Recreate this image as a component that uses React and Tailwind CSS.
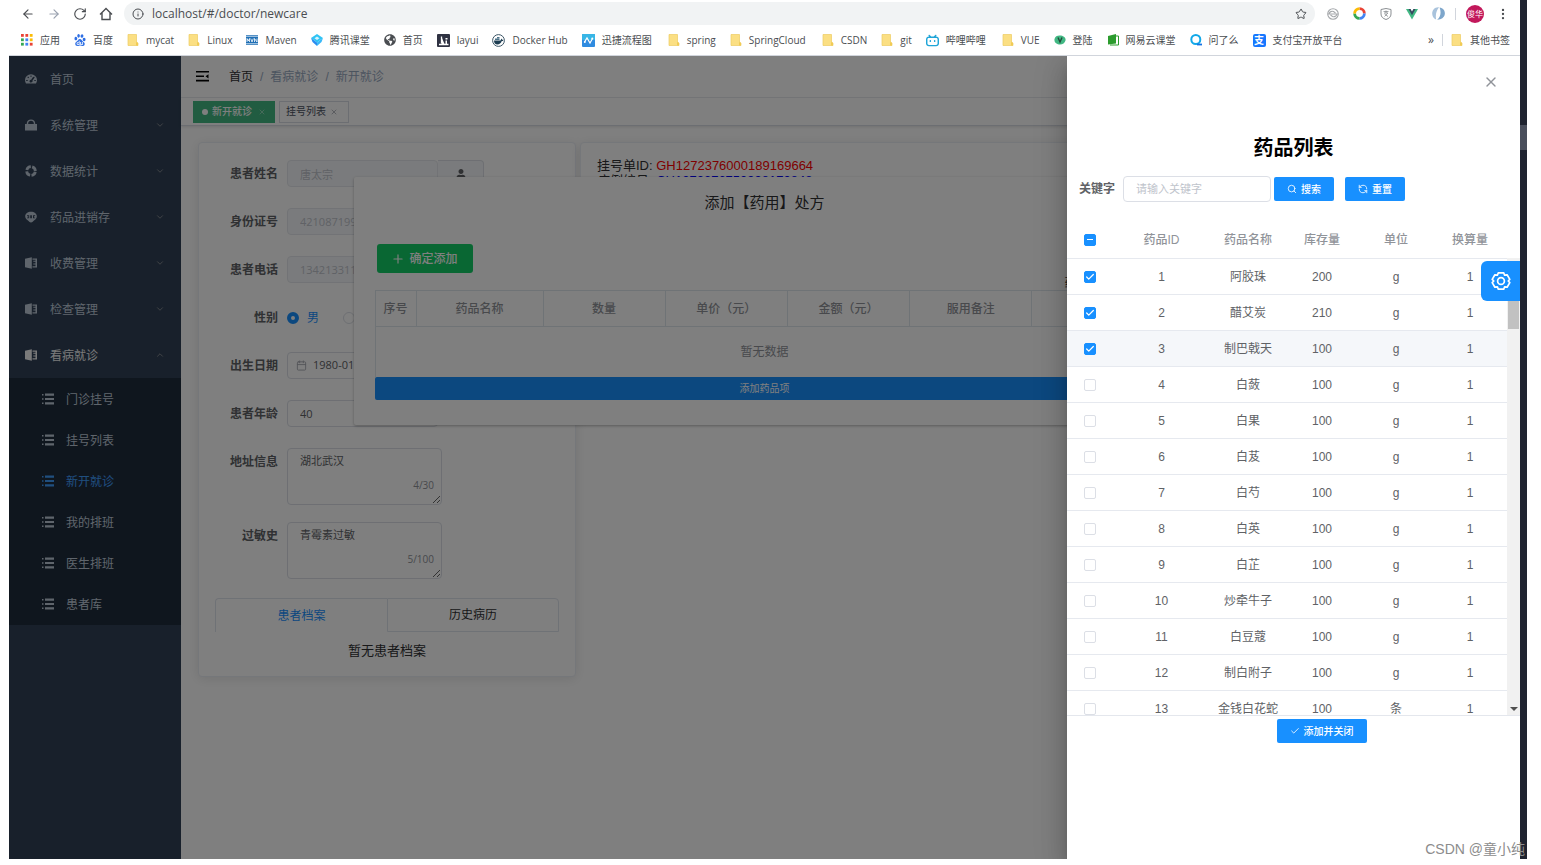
import { useState } from 'react'
import {
  ArrowLeft,
  ArrowRight,
  Calendar,
  Check,
  ChevronDown,
  ChevronUp,
  Info,
  MoreVertical,
  Plus,
  RefreshCcw,
  RotateCw,
  Search,
  Star,
  X,
} from 'lucide-react'
import { FaGlobeAmericas, FaUser } from 'react-icons/fa'
import { SiBaidu, SiBilibili } from 'react-icons/si'

const medicines = [
  { id: 1, name: '阿胶珠', stock: 200, unit: 'g' },
  { id: 2, name: '醋艾炭', stock: 210, unit: 'g' },
  { id: 3, name: '制巴戟天', stock: 100, unit: 'g' },
  { id: 4, name: '白蔹', stock: 100, unit: 'g' },
  { id: 5, name: '白果', stock: 100, unit: 'g' },
  { id: 6, name: '白芨', stock: 100, unit: 'g' },
  { id: 7, name: '白芍', stock: 100, unit: 'g' },
  { id: 8, name: '白英', stock: 100, unit: 'g' },
  { id: 9, name: '白芷', stock: 100, unit: 'g' },
  { id: 10, name: '炒牵牛子', stock: 100, unit: 'g' },
  { id: 11, name: '白豆蔻', stock: 100, unit: 'g' },
  { id: 12, name: '制白附子', stock: 100, unit: 'g' },
  { id: 13, name: '金钱白花蛇', stock: 100, unit: '条' },
]

/* ---------- icons ---------- */

function AppsIcon() {
  const colors = ['#ea4335', '#ea4335', '#fbbc05', '#34a853', '#4285f4', '#fbbc05', '#34a853', '#4285f4', '#ea4335']
  return (
    <svg viewBox="0 0 12 12" className="size-3">
      {colors.map((c, i) => (
        <rect key={i} x={(i % 3) * 4.4} y={Math.floor(i / 3) * 4.4} width="2.8" height="2.8" fill={c} />
      ))}
    </svg>
  )
}

function FolderIcon() {
  return (
    <svg viewBox="0 0 12 12" className="size-3">
      <path d="M1 .5h8.500v7.500l1.500 1v2.500H1z" fill="#fbdf83" stroke="#eccb62" strokeWidth=".7" />
      <path d="M9 8v3.500h2V9z" fill="#f1cb55" />
    </svg>
  )
}

function MavenIcon() {
  return (
    <svg viewBox="0 0 12 12" className="size-3">
      <rect y="1" width="12" height="10" fill="#1f6fb5" />
      <path d="M0 2.200h12M0 9.800h12" stroke="#fff" strokeWidth=".8" />
      <path d="M1 8V4.500L2.300 7l1.200-2.500V8M4.700 4.500L6 8l1.300-3.500M8.500 8V4.500L11 8V4.500" fill="none" stroke="#fff" strokeWidth=".8" />
    </svg>
  )
}

function TencentIcon() {
  return (
    <svg viewBox="0 0 12 12" className="size-3">
      <path d="M6 0l6 4-6 4.500L0 4z" fill="#2fc4f5" />
      <path d="M0 4l6 4.500V12L1.500 8z" fill="#2a8cf0" />
      <path d="M12 4L6 8.500V12l4.500-4z" fill="#38b8f8" />
      <path d="M6 2.500L8.500 4.200 6 6 3.500 4.200z" fill="#fff" opacity=".8" />
    </svg>
  )
}

function LayuiIcon() {
  return (
    <svg viewBox="0 0 13 13" className="size-[13px]">
      <rect width="13" height="13" rx="1" fill="#2f3242" />
      <path d="M4.500 2.500v7M2 10.500h9.500" fill="none" stroke="#fff" strokeWidth="1.300" />
      <path d="M5 4l2.500 6H5zM8.500 4h2v1.500h-2zM8.500 6.500h1.500V10H8.500z" fill="#fff" />
    </svg>
  )
}

function DockerIcon() {
  return (
    <svg viewBox="0 0 13 13" className="size-[13px]">
      <circle cx="6.500" cy="6.500" r="5.900" fill="#fff" stroke="#3c5566" />
      <path d="M2 6.500h6.500l1-2 .8 1.200 1.200.2c-.4 1-1 1.200-1.700 1.200C9 9.500 7.300 10.500 5.500 10.500 3.300 10.500 2 9 2 6.500z" fill="#1d3d52" />
      <path d="M3 4.500h4.500V6H3zM5 3h2.500v1.200H5z" fill="#4d7389" />
    </svg>
  )
}

function FlowIcon() {
  return (
    <svg viewBox="0 0 13 13" className="size-[13px]">
      <rect width="13" height="13" rx="1" fill="#2f8be0" />
      <rect width="13" height="6" rx="1" fill="#38b6e6" />
      <path d="M2.500 8l2.500-4 3 5 2.500-4.500" fill="none" stroke="#fff" strokeWidth="1.200" />
      <circle cx="2.800" cy="8" r="1" fill="#fff" />
      <circle cx="10.300" cy="4.500" r="1" fill="#fff" />
    </svg>
  )
}

function LoginIcon() {
  return (
    <svg viewBox="0 0 12 12" className="size-3">
      <path d="M.5 5C1 2 4 1 7 1.500S12 4 11.500 6.500 8 11 5 10.500 0 8 .5 5z" fill="#41b883" />
      <path d="M4 3.500l2 4.500 2-4.500" fill="none" stroke="#234a3c" strokeWidth="1.400" />
    </svg>
  )
}

function CloudClassIcon() {
  return (
    <svg viewBox="0 0 12 12" className="size-3">
      <path d="M1 2l8-2v9.500L1 10.500z" fill="#2c9c2e" />
      <path d="M9 2h2.500v9H3" fill="none" stroke="#2c9c2e" />
    </svg>
  )
}

function AskIcon() {
  return (
    <svg viewBox="0 0 12 12" className="size-3">
      <circle cx="5.800" cy="5.500" r="4.500" fill="none" stroke="#12a8e8" strokeWidth="2" />
      <path d="M7 10.500h5" stroke="#1573e6" strokeWidth="1.800" />
    </svg>
  )
}

function AlipayIcon() {
  return (
    <span className="flex size-[13px] items-center justify-center rounded-xs bg-[#1677ff] text-[10px] font-bold text-white">支</span>
  )
}

function VueIcon() {
  return (
    <svg viewBox="0 0 12 12" className="size-3">
      <path d="M0 1h12L6 11.500z" fill="#41b883" />
      <path d="M2.500 1h7L6 7.200z" fill="#34495e" />
      <path d="M4.600 1h2.800L6 3.500z" fill="#fff" />
    </svg>
  )
}

function RingIcon() {
  return (
    <svg viewBox="0 0 12 12" className="size-[13px]">
      <g fill="none" strokeWidth="2.600">
        <path d="M6 1.500A4.500 4.500 0 0 1 10.500 6" stroke="#ea4335" />
        <path d="M10.500 6A4.500 4.500 0 0 1 6 10.500" stroke="#4285f4" />
        <path d="M6 10.500A4.500 4.500 0 0 1 1.500 6" stroke="#34a853" />
        <path d="M1.500 6A4.500 4.500 0 0 1 6 1.500" stroke="#fbbc05" />
      </g>
    </svg>
  )
}

function SyncIcon() {
  return (
    <svg viewBox="0 0 12 12" className="size-3" fill="none" stroke="#a5a8ab" strokeWidth="1.100">
      <circle cx="6" cy="6" r="5.300" />
      <path d="M2 6c.5-2.500 3-3 4.500-2.500L8.500 5M10 6c-.5 2.500-3 3-4.500 2.500L3.500 7M1 6h10" />
    </svg>
  )
}

function ShieldIcon() {
  return (
    <svg viewBox="0 0 12 12" className="size-3" fill="none" stroke="#8b8f93">
      <path d="M1 1.500L6 .5l5 1V6c0 2.800-2 4.600-5 5.500C3 10.600 1 8.800 1 6z" />
      <path d="M3.500 3.500h5M6 2.500V5M4 5h4L4.500 8.500M4.500 6L8 8.500" strokeWidth=".8" />
    </svg>
  )
}

function FeatherIcon() {
  return (
    <svg viewBox="0 0 12 12" className="size-[13px]">
      <path d="M6.500.3C2.500-.2 0 3 .2 6.500.4 9 1.800 10.800 3.800 11.600 3 7 4 3.500 6.500.3z" fill="#a9c3dc" />
      <path d="M7 .4c3.500.4 5.300 3.300 4.800 6.300-.5 3-3.300 5.100-7 5C8 9 8.700 5 7 .4z" fill="#7ea6cb" />
      <path d="M6.800 2.500c.6 2.500 0 5-1.800 7-.4-2.500.2-5 1.800-7z" fill="#fff" />
    </svg>
  )
}

function HomeIcon() {
  return (
    <svg viewBox="0 0 14 14" className="size-3.5" fill="none" stroke="currentColor" strokeWidth="1.400">
      <path d="M1 7.500L7 1.500l6 6M3 6v6.500h8V6" />
    </svg>
  )
}

function DashboardIcon() {
  return (
    <svg viewBox="0 0 12 12" className="size-3" fill="currentColor">
      <path
        fillRule="evenodd"
        d="M6 1.200A6 5.800 0 0 0 0 7c0 1.200.3 2.400 1 3.500h10c.7-1.100 1-2.300 1-3.500A6 5.800 0 0 0 6 1.200zM5.500 2.500h1V4h-1zM2.300 4.200l.8-.8 1 1-.8.8zM1.200 7h1.500v1H1.200zM9.300 7h1.500v1H9.300zM7.600 4.600l1.500-1 .6.8-2.200 3.200c.3 1-.3 2-1.500 2s-1.800-1.100-1.300-2.100c.3-.6.9-.8 1.500-.7z"
      />
    </svg>
  )
}

function LockIcon() {
  return (
    <svg viewBox="0 0 12 12" className="size-3" fill="currentColor">
      <path fillRule="evenodd" d="M1.800 5V4.300C1.800 2 3.600.5 6 .5s4.200 1.500 4.200 3.800V5H12v6.500H0V5zm1.400 0h5.600v-.7C8.800 2.800 7.600 1.800 6 1.800s-2.800 1-2.800 2.500z" />
    </svg>
  )
}

function ChartIcon() {
  return (
    <svg viewBox="0 0 12 12" className="size-3" fill="none" stroke="currentColor" strokeWidth="2.800">
      <circle cx="6" cy="6" r="4.300" strokeDasharray="5.350 1.400" strokeDashoffset="-.7" />
    </svg>
  )
}

function PeopleIcon() {
  return (
    <svg viewBox="0 0 12 12" className="size-3" fill="currentColor">
      <path
        fillRule="evenodd"
        d="M6 .8c3.300 0 5.800 1.900 5.800 4.500 0 1.800-1 3-2.500 3.900C8 10.200 7.500 11.500 6 11.500S4 10.200 2.700 9.200C1.200 8.300.2 7.100.2 5.300.2 2.700 2.700.8 6 .8zM2 4.300v1h1.300v1.200H2v.8h2.200v-3zM5.200 4.300v3h1.700v-3zM8 4.300v3h2.200v-.8H9V5.300h1.200v-1z"
      />
    </svg>
  )
}

function BookIcon() {
  return (
    <svg viewBox="0 0 12 12" className="size-3" fill="currentColor">
      <path d="M6.800.3v11.400L0 10.300V1.700z" />
      <path d="M7.500 1.500H12v9H7.500v-1.200h3V7.600H8.300V6.500h2.200V4.800H8.300V3.700h2.200v-1h-3z" />
    </svg>
  )
}

function ListIcon() {
  return (
    <svg viewBox="0 0 12 12" className="size-3" fill="currentColor">
      <path d="M0 1h1.500v1.500H0zM3 .6h9v2.200H3zM0 5.300h1.500v1.500H0zM3 4.900h9v2.200H3zM0 9.600h1.500v1.500H0zM3 9.200h9v2.200H3z" />
    </svg>
  )
}

function HamburgerIcon() {
  return (
    <svg viewBox="0 0 14 12" className="h-3 w-3.5" fill="#000">
      <path d="M1 0h13v1.600H1zM1 4.400h8v1.600H1zM1 8.800h13v1.600H1zM13.500 3.200v4.200L10.500 5.300z" />
    </svg>
  )
}

function GearIcon() {
  return (
    <svg viewBox="0 0 20 20" className="size-5" fill="none" stroke="#fff" strokeWidth="1.700">
      <path strokeLinejoin="round" d="M7.300 1.800h5.400l.9 2.400 2.500-.4 2.700 4.600L17.200 10l1.600 1.600-2.700 4.600-2.500-.4-.9 2.400H7.300l-.9-2.400-2.500.4-2.700-4.600L2.800 10 1.200 8.400l2.700-4.600 2.500.4z" />
      <circle cx="10" cy="10" r="3.400" />
    </svg>
  )
}

/* ---------- browser chrome ---------- */

const bookmarks = [
  { label: '应用', icon: <AppsIcon /> },
  { label: '百度', icon: <SiBaidu className="size-3 text-[#2f6fe4]" /> },
  { label: 'mycat', icon: <FolderIcon /> },
  { label: 'Linux', icon: <FolderIcon /> },
  { label: 'Maven', icon: <MavenIcon /> },
  { label: '腾讯课堂', icon: <TencentIcon /> },
  { label: '首页', icon: <FaGlobeAmericas className="size-3 text-[#4a4d51]" /> },
  { label: 'layui', icon: <LayuiIcon /> },
  { label: 'Docker Hub', icon: <DockerIcon /> },
  { label: '迅捷流程图', icon: <FlowIcon />, wide: true },
  { label: 'spring', icon: <FolderIcon /> },
  { label: 'SpringCloud', icon: <FolderIcon />, wide: true },
  { label: 'CSDN', icon: <FolderIcon /> },
  { label: 'git', icon: <FolderIcon /> },
  { label: '哔哩哔哩', icon: <SiBilibili className="size-[13px] text-[#1fa5d8]" />, wide: true },
  { label: 'VUE', icon: <FolderIcon /> },
  { label: '登陆', icon: <LoginIcon /> },
  { label: '网易云课堂', icon: <CloudClassIcon /> },
  { label: '问了么', icon: <AskIcon /> },
  { label: '支付宝开放平台', icon: <AlipayIcon /> },
]

function BrowserBar() {
  return (
    <header className="font-['Open_Sans','Noto_Sans_CJK_SC',sans-serif] text-[#4a4d51]">
      <div className="flex h-[27px] items-center pr-2.5 pl-3">
        <nav className="flex w-[103px] items-center gap-3">
          <button aria-label="后退"><ArrowLeft className="size-3.5" /></button>
          <button aria-label="前进"><ArrowRight className="size-3.5 text-gray-400" /></button>
          <button aria-label="刷新"><RotateCw className="size-3.5" /></button>
          <button aria-label="主页"><HomeIcon /></button>
        </nav>
        <div className="flex h-[23px] flex-1 items-center gap-2 rounded-full bg-[#f1f3f4] px-2">
          <Info className="size-3" />
          <input
            aria-label="地址"
            defaultValue="localhost/#/doctor/newcare"
            className="min-w-0 flex-1 bg-transparent text-xs text-[#4a4d51] outline-none"
          />
          <button aria-label="收藏"><Star className="size-3" /></button>
        </div>
        <div className="flex items-center gap-3.5 pl-3">
          <SyncIcon />
          <RingIcon />
          <ShieldIcon />
          <VueIcon />
          <FeatherIcon />
        </div>
        <span className="mx-2.5 h-3 w-px bg-gray-300" />
        <span className="flex size-[18px] items-center justify-center rounded-full bg-[#c2185b] text-[8px] text-white">俊华</span>
        <button aria-label="菜单" className="pl-3"><MoreVertical className="size-3.5" /></button>
      </div>
      <div className="flex h-[29px] items-center border-b border-gray-300 pr-2.5 pb-0.5 pl-3 text-[10px]">
        <nav className="flex flex-1 items-center gap-3.5">
          {bookmarks.map((b) => (
            <a key={b.label} href="#" className={`flex items-center gap-[7px] whitespace-nowrap ${b.wide ? 'pr-0.5' : ''}`}>
              {b.icon}
              {b.label}
            </a>
          ))}
        </nav>
        <span className="text-xs">»</span>
        <span className="mx-2 h-3 w-px bg-gray-300" />
        <a href="#" className="flex items-center gap-[7px]">
          <FolderIcon />
          其他书签
        </a>
      </div>
    </header>
  )
}

/* ---------- page behind the drawer ---------- */

const menus = [
  { label: '首页', icon: <DashboardIcon />, leaf: true },
  { label: '系统管理', icon: <LockIcon /> },
  { label: '数据统计', icon: <ChartIcon /> },
  { label: '药品进销存', icon: <PeopleIcon /> },
  { label: '收费管理', icon: <BookIcon /> },
  { label: '检查管理', icon: <BookIcon /> },
  { label: '看病就诊', icon: <BookIcon />, open: true },
]

const subMenus = ['门诊挂号', '挂号列表', '新开就诊', '我的排班', '医生排班', '患者库']

function Sidebar() {
  return (
    <aside className="w-[172px] shrink-0 bg-[#304156] text-xs text-[#bfcbd9]">
      {menus.map((m) => (
        <a
          key={m.label}
          href="#"
          className={`flex h-[46px] items-center gap-[13px] px-4 ${m.open ? 'text-[#f4f4f5]' : ''}`}
        >
          {m.icon}
          <span className="flex-1 pt-0.5">{m.label}</span>
          {!m.leaf && (m.open ? <ChevronUp className="size-2.5 text-[#909399]" /> : <ChevronDown className="size-2.5 text-[#909399]" />)}
        </a>
      ))}
      <div className="bg-[#1f2d3d] pb-px">
        {subMenus.map((label) => (
          <a
            key={label}
            href="#"
            className={`flex h-[41px] items-center gap-3 pl-[33px] ${label === '新开就诊' ? 'text-[#409eff]' : ''}`}
          >
            <ListIcon />
            <span className="pt-0.5">{label}</span>
          </a>
        ))}
      </div>
    </aside>
  )
}

function FormRow({ id, label, children }) {
  return (
    <div className="flex min-h-[27px] items-start gap-[9px]">
      <label htmlFor={id} className="w-[63px] text-right text-xs leading-[28px] font-bold text-[#606266]">
        {label}
      </label>
      {children}
    </div>
  )
}

const inputClass = "h-[27px] w-[151px] rounded-sm border border-[#dcdfe6] bg-white px-3 text-[11px] text-[#606266]"
const disabledClass = "h-[27px] w-[151px] rounded-sm border border-[#e4e7ed] bg-[#f5f7fa] px-3 text-[11px] text-[#c0c4cc]"
const areaClass = "block h-[57px] w-[155px] resize rounded-sm border border-[#dcdfe6] bg-white px-3 py-1 text-[11px] leading-4 text-[#606266]"

function PatientCard() {
  return (
    <section className="w-[378px] shrink-0 self-start rounded-sm border border-[#ebeef5] bg-white px-4 pt-[17px] pb-4 font-['Open_Sans','Noto_Sans_CJK_SC',sans-serif] shadow-[0_2px_12px_0_rgba(0,0,0,0.1)]">
      <div className="flex flex-col gap-5">
        <FormRow id="name" label="患者姓名">
          <div className="flex">
            <input id="name" disabled defaultValue="唐太宗" className={disabledClass} />
            <button aria-label="选择患者" className="flex h-[27px] w-[46px] items-center justify-center rounded-r-sm border border-l-0 border-[#dcdfe6] bg-[#f5f7fa] text-[#606266]">
              <FaUser className="size-2.5" />
            </button>
          </div>
        </FormRow>
        <FormRow id="idcard" label="身份证号">
          <input id="idcard" disabled defaultValue="421087199801011234" className={disabledClass} />
        </FormRow>
        <FormRow id="phone" label="患者电话">
          <input id="phone" disabled defaultValue="13421331100" className={disabledClass} />
        </FormRow>
        <FormRow id="male" label="性别">
          <div className="flex h-[28px] items-center gap-2 text-xs">
            <input id="male" type="radio" name="sex" defaultChecked className="size-3 appearance-none rounded-full border-4 border-[#1890ff] bg-white" />
            <label htmlFor="male" className="pr-4 text-[#1890ff]">男</label>
            <input id="female" type="radio" name="sex" className="size-3 appearance-none rounded-full border border-[#dcdfe6] bg-white" />
            <label htmlFor="female">女</label>
          </div>
        </FormRow>
        <FormRow id="birth" label="出生日期">
          <div className="flex h-[27px] w-[151px] items-center gap-1.5 rounded-sm border border-[#dcdfe6] pl-2">
            <Calendar className="size-[11px] text-[#a8abb2]" />
            <input id="birth" defaultValue="1980-01-01" className="min-w-0 flex-1 text-[11px] text-[#606266]" />
          </div>
        </FormRow>
        <FormRow id="age" label="患者年龄">
          <input id="age" defaultValue="40" className={inputClass} />
        </FormRow>
        <div className="flex flex-col gap-[17px]">
          <FormRow id="address" label="地址信息">
            <div className="relative">
              <textarea id="address" defaultValue="湖北武汉" className={areaClass} />
              <span className="absolute right-2 bottom-3 text-[10px] leading-4 text-[#909399]">4/30</span>
            </div>
          </FormRow>
          <FormRow id="allergy" label="过敏史">
            <div className="relative">
              <textarea id="allergy" defaultValue="青霉素过敏" className={areaClass} />
              <span className="absolute right-2 bottom-3 text-[10px] leading-4 text-[#909399]">5/100</span>
            </div>
          </FormRow>
        </div>
      </div>
      <div className="mt-[19px] grid grid-cols-2 text-xs">
        <button className="h-[34px] rounded-tl-sm border-t border-l border-[#dfe4ed] text-[#1890ff]">患者档案</button>
        <button className="h-[34px] rounded-tr-sm border border-[#dfe4ed] text-[#303133]">历史病历</button>
      </div>
      <p className="pt-2 text-center text-[13px] leading-5 text-[#303133]">暂无患者档案</p>
    </section>
  )
}

function MainPage() {
  return (
    <main className="min-w-0 flex-1 bg-white">
      <div className="flex h-[42px] items-center border-b border-[#eceef2] px-3.5 text-xs">
        <button aria-label="折叠菜单"><HamburgerIcon /></button>
        <nav className="flex gap-[7px] pl-5 text-[#97a8be]">
          <a href="#" className="text-[#303133]">首页</a>
          <span>/</span>
          <a href="#">看病就诊</a>
          <span>/</span>
          <a href="#">新开就诊</a>
        </nav>
      </div>
      <div className="flex h-7 items-center gap-1 border-b border-[#d8dce5] px-3 text-[10px] shadow-[0_1px_3px_0_rgba(0,0,0,0.12)]">
        <a href="#" className="flex h-[22px] w-[82px] items-center gap-1 border border-[#42b983] bg-[#42b983] pl-2 font-medium text-white">
          <span className="size-1.5 rounded-full bg-white" />
          新开就诊
          <X className="ml-0.5 size-2 opacity-60" />
        </a>
        <a href="#" className="flex h-[22px] w-[70px] items-center border border-[#d8dce5] bg-white px-1.5 text-[#495060]">
          挂号列表
          <X className="ml-1 size-2 opacity-60" />
        </a>
      </div>
      <div className="flex gap-1 px-[17px] py-4">
        <PatientCard />
        <section className="h-[220px] min-w-0 flex-1 rounded-sm border border-[#ebeef5] bg-white px-4 pt-[15px] text-[13px] leading-[15px] text-[#303133] shadow-[0_2px_12px_0_rgba(0,0,0,0.1)]">
          <p>挂号单ID: <span className="text-[#ff0000]">GH1272376000189169664</span></p>
          <p>病例编号: <span className="text-[#0000ff]">CH1272376750998170848</span></p>
        </section>
      </div>
    </main>
  )
}

function PrescriptionDialog() {
  const headCell = 'border border-[#dfe6ec] font-medium'
  return (
    <div className="absolute inset-0 flex items-start justify-center pt-[121px]">
      <section role="dialog" aria-label="添加处方" className="w-[822px] rounded-xs bg-white px-[21px] pt-4 pb-[25px] shadow-[0_1px_3px_rgba(0,0,0,0.3)]">
        <h2 className="text-center text-[15px] leading-5 text-[#303133]">添加【药用】处方</h2>
        <div className="flex items-start justify-between pt-[31px] pl-0.5">
          <button className="flex h-[29px] w-24 items-center justify-center gap-1 rounded-[3px] bg-[#13ce66] text-xs font-medium text-white">
            <Plus className="size-3.5" />
            确定添加
          </button>
          <p className="w-[90px] pt-[31px] text-xs leading-4 text-[#303133]">药用总额：0</p>
        </div>
        <table className="-mt-px w-full table-fixed border-collapse text-xs text-[#909399]">
          <colgroup>
            <col className="w-[41px]" />
            <col className="w-[127px]" />
            <col />
            <col />
            <col />
            <col />
            <col />
          </colgroup>
          <thead>
            <tr className="h-9">
              <th className={headCell}>序号</th>
              <th className={headCell}>药品名称</th>
              <th className={headCell}>数量</th>
              <th className={headCell}>单价（元）</th>
              <th className={headCell}>金额（元）</th>
              <th className={headCell}>服用备注</th>
              <th className={headCell}>操作</th>
            </tr>
          </thead>
          <tbody>
            <tr className="h-[50px]">
              <td colSpan={7} className="border-x border-[#dfe6ec] text-center">暂无数据</td>
            </tr>
          </tbody>
        </table>
        <button className="block h-[23px] w-full rounded-xs bg-[#1890ff] text-[10px] text-white">添加药品项</button>
      </section>
    </div>
  )
}

/* ---------- drawer ---------- */

function CheckBox({ label, checked, mixed, onChange }) {
  return (
    <span className="relative mx-auto flex size-3">
      <input
        type="checkbox"
        aria-label={label}
        checked={checked}
        onChange={onChange}
        className="size-3 appearance-none rounded-xs border border-[#dcdfe6] bg-white checked:border-[#1890ff] checked:bg-[#1890ff]"
      />
      {checked && !mixed && <Check strokeWidth={3} className="pointer-events-none absolute inset-0 m-auto size-2.5 text-white" />}
      {mixed && <span className="pointer-events-none absolute inset-0 m-auto h-px w-1.5 bg-white" />}
    </span>
  )
}

function Columns() {
  return (
    <colgroup>
      <col className="w-[45px]" />
      <col className="w-[99px]" />
      <col />
      <col />
      <col />
      <col />
    </colgroup>
  )
}

function MedicineDrawer() {
  const [selected, setSelected] = useState([1, 2, 3])

  const toggle = (id) => {
    setSelected(selected.includes(id) ? selected.filter((s) => s !== id) : [...selected, id])
  }

  return (
    <aside className="absolute inset-y-0 right-0 w-[453px] bg-white shadow-[0_8px_10px_-5px_rgba(0,0,0,0.2),0_16px_24px_2px_rgba(0,0,0,0.14),0_6px_30px_5px_rgba(0,0,0,0.12)]">
      <div className="flex justify-end pt-[18px] pr-[21px]">
        <button aria-label="关闭"><X className="size-4 text-[#909399]" strokeWidth={2} /></button>
      </div>
      <h2 className="pt-[42px] text-center text-xl leading-8 font-bold text-black">药品列表</h2>
      <form className="flex items-center pt-3 pl-3" onSubmit={(e) => e.preventDefault()}>
        <label htmlFor="keyword" className="w-[44px] text-xs font-bold text-[#606266]">关键字</label>
        <input
          id="keyword"
          placeholder="请输入关键字"
          className="h-[26px] w-[148px] rounded-sm border border-[#dcdfe6] px-3 text-[11px] placeholder:text-[#c0c4cc]"
        />
        <button className="ml-[3px] flex h-6 w-[60px] items-center justify-center gap-1 rounded-xs bg-[#1890ff] text-[10px] font-medium text-white">
          <Search className="size-2.5" />
          搜索
        </button>
        <button className="ml-[11px] flex h-6 w-[60px] items-center justify-center gap-1 rounded-xs bg-[#1890ff] text-[10px] font-medium text-white">
          <RefreshCcw className="size-2.5" />
          重置
        </button>
      </form>

      <div className="mt-[19px] border-b border-[#e4e7ed]">
        <div className="pr-[13px]">
          <table className="w-full table-fixed border-collapse text-xs text-[#909399]">
            <Columns />
            <thead>
              <tr className="h-[37px]">
                <th><CheckBox label="全选" checked mixed onChange={() => setSelected([])} /></th>
                <th className="font-medium">药品ID</th>
                <th className="font-medium">药品名称</th>
                <th className="font-medium">库存量</th>
                <th className="font-medium">单位</th>
                <th className="font-medium">换算量</th>
              </tr>
            </thead>
          </table>
        </div>
        <div className="flex h-[457px] overflow-hidden">
          <div className="flex-1">
            <table className="w-full table-fixed border-collapse text-center text-xs text-[#606266]">
              <Columns />
              <tbody>
                {medicines.map((m) => (
                  <tr key={m.id} className={`h-9 border-y border-[#e6e9ef] ${m.id === 3 ? 'bg-[#f5f7fa]' : ''}`}>
                    <td><CheckBox label={m.name} checked={selected.includes(m.id)} onChange={() => toggle(m.id)} /></td>
                    <td>{m.id}</td>
                    <td>{m.name}</td>
                    <td>{m.stock}</td>
                    <td>{m.unit}</td>
                    <td>1</td>
                  </tr>
                ))}
              </tbody>
            </table>
          </div>
          <div className="flex w-[13px] flex-col items-center justify-between bg-[#f1f1f1] pt-4">
            <span className="h-[55px] w-[11px] bg-[#c1c1c1]" />
            <svg viewBox="0 0 8 4" className="mb-1 h-1 w-2"><path d="M0 0h8L4 4z" fill="#505050" /></svg>
          </div>
        </div>
      </div>
      <div className="flex justify-center pt-[3px] pl-14">
        <button className="flex h-6 w-[90px] items-center justify-center gap-1 rounded-xs bg-[#1890ff] text-[10px] font-medium text-white">
          <Check className="size-2.5" />
          添加并关闭
        </button>
      </div>
      <button aria-label="设置" className="absolute top-[205px] right-0 flex h-10 w-[39px] items-center justify-center rounded-l-md bg-[#1890ff]">
        <GearIcon />
      </button>
    </aside>
  )
}

export default function App() {
  return (
    <div className="relative flex min-h-screen bg-white pr-3.5 pb-1.5 pl-[9px] font-['Liberation_Sans','Noto_Sans_CJK_SC',sans-serif]">
      <div className="flex min-w-0 flex-1 flex-col">
        <BrowserBar />
        <div className="relative flex flex-1 overflow-hidden">
          <Sidebar />
          <MainPage />
          <PrescriptionDialog />
          <div className="absolute inset-0 bg-black/50" />
          <MedicineDrawer />
        </div>
      </div>
      <div className="w-[7px] bg-[#1f2430] pt-[125px]">
        <div className="h-[25px] bg-[#4a4f5c]" />
      </div>
      <span className="absolute right-4 bottom-1.5 text-sm leading-5 text-[#8c8c8c]">CSDN @童小纯</span>
    </div>
  )
}
